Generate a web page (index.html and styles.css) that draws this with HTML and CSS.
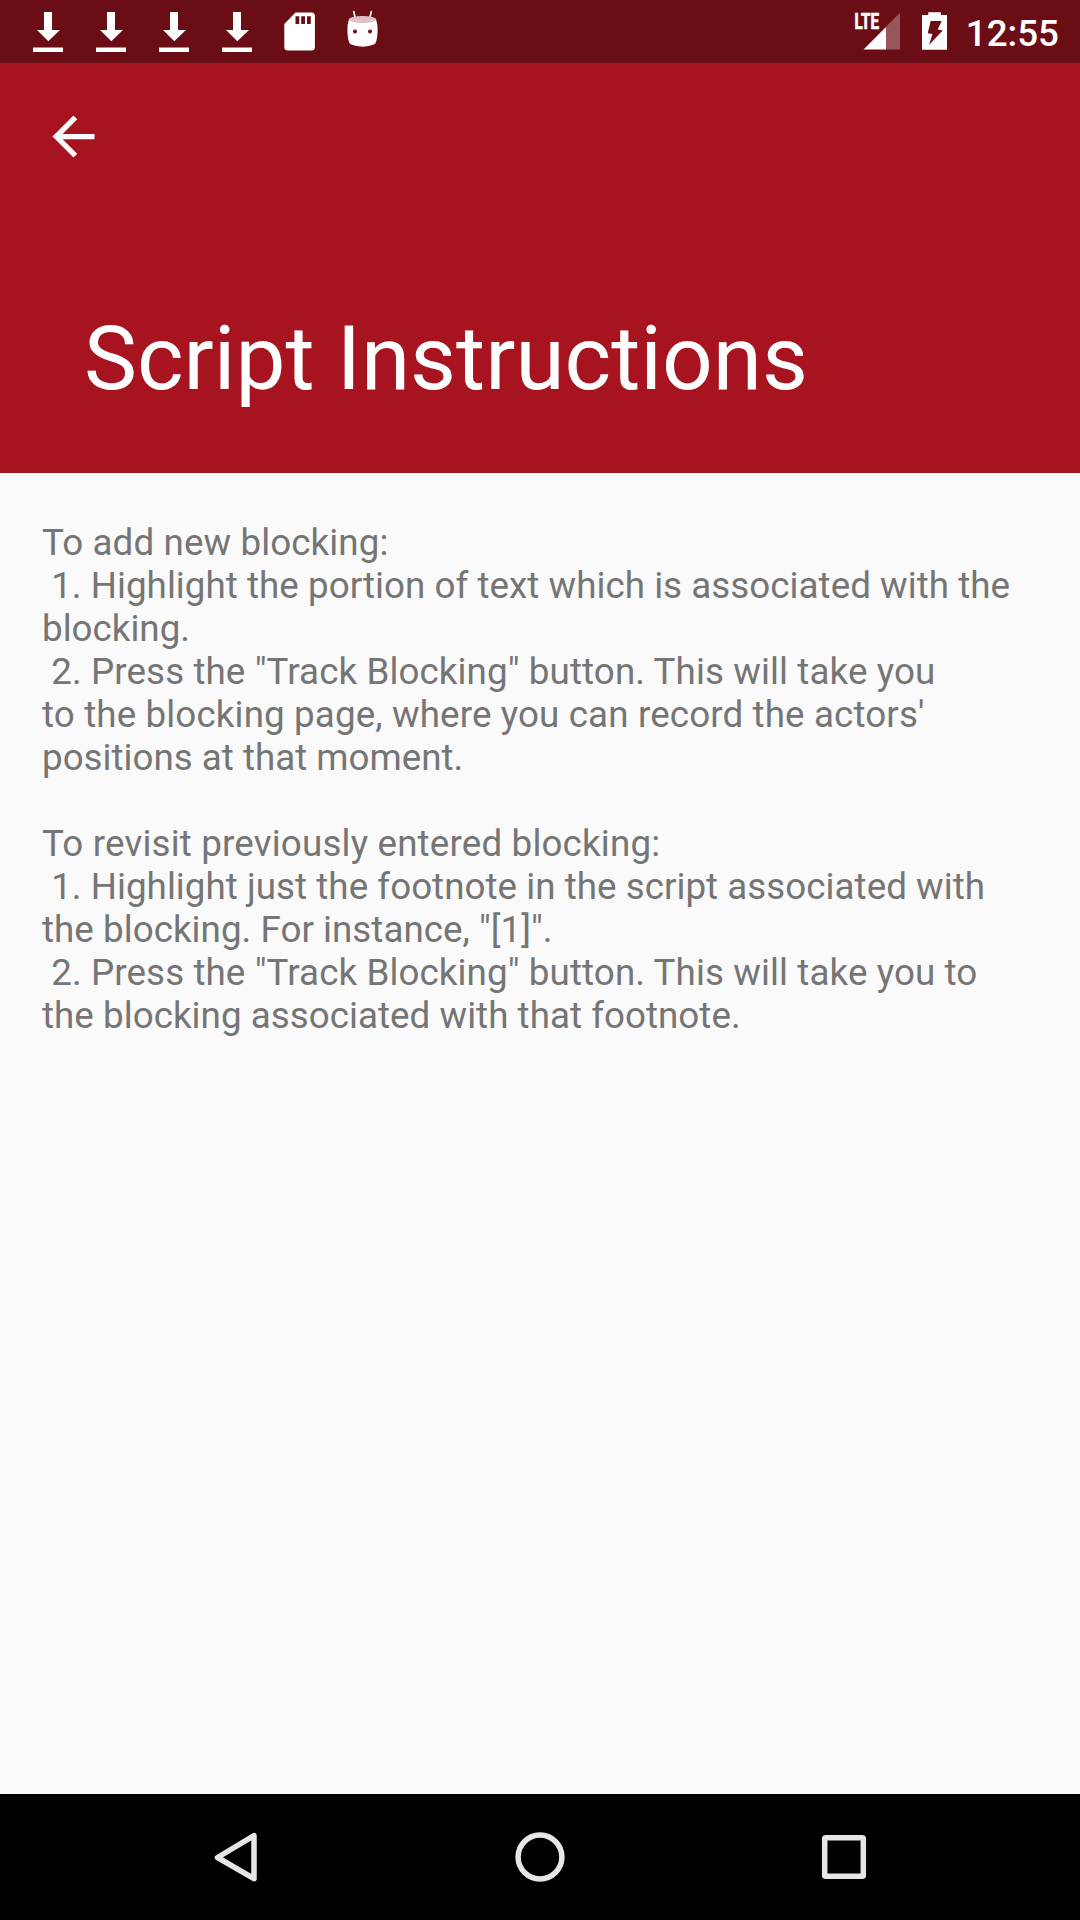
FILE: index.html
```html
<!DOCTYPE html>
<html lang="en">
<head>
<meta charset="utf-8">
<title>Script Instructions</title>
<link rel="stylesheet" href="styles.css">
</head>
<body>
<div class="screen">
  <div class="status-bar">
    <div class="notifications">
      <svg class="notif" viewBox="0 0 63 63"><path d="M28 12h8v18h8L32.3 41.3 21 30h7zM17 47.4h30v4.6H17z"/></svg>
      <svg class="notif" viewBox="0 0 63 63"><path d="M28 12h8v18h8L32.3 41.3 21 30h7zM17 47.4h30v4.6H17z"/></svg>
      <svg class="notif" viewBox="0 0 63 63"><path d="M28 12h8v18h8L32.3 41.3 21 30h7zM17 47.4h30v4.6H17z"/></svg>
      <svg class="notif" viewBox="0 0 63 63"><path d="M28 12h8v18h8L32.3 41.3 21 30h7zM17 47.4h30v4.6H17z"/></svg>
      <svg class="notif" viewBox="0 0 63 63"><path fill-rule="evenodd" d="M27.5 12.5H43.5Q46.9 12.7 46.9 16V47Q46.9 50.5 43.5 50.5H19.8Q16.3 50.5 16.3 47V24zM27.5 16.3V24h3.8V16.3zM33.2 16.3V24H37V16.3zM39 16.3V24h3.8V16.3z"/></svg>
      <svg class="notif" viewBox="0 0 63 63">
        <path d="M22.7 11.5l1.6 7M40.3 11.5l-1.6 7" stroke="#fff" stroke-width="1.6" stroke-linecap="round"/>
        <path fill-rule="evenodd" d="M18 19Q31.500 26 45 19Q46.800 24 46.600 31Q46.400 40 44 44Q38 46.700 31.500 46.700T19 44Q16.600 40 16.400 31Q16.200 24 18 19zM22 31.500a2 2 0 1 0 4 0a2 2 0 1 0-4 0zM37 31.500a2 2 0 1 0 4 0a2 2 0 1 0-4 0z"/>
        <ellipse class="droid-top" cx="31.500" cy="19.500" rx="13.500" ry="3.400"/>
      </svg>
    </div>
    <div class="system">
      <svg class="signal" viewBox="0 0 50 63">
        <path opacity=".3" d="M36 26.800L50 12.800V49.500H36z"/>
        <path d="M36 27V49.500H13.500z"/>
        <text class="lte" x="4.500" y="29" textLength="24.500" lengthAdjust="spacingAndGlyphs">LTE</text>
      </svg>
      <svg class="battery" viewBox="0 0 25 63"><path fill-rule="evenodd" d="M6.300 12.300h12.500v2.700H25V49.800H0V15h6.300zM8.700 21L5.700 33.300l4.800.7L7 45 20.700 30.500l-5-1L19.700 21z"/></svg>
      <span class="clock">12:55</span>
    </div>
  </div>
  <header class="app-bar">
    <svg class="back" viewBox="0 0 24 24"><path d="M20 11H7.830l5.590-5.590L12 4l-8 8 8 8 1.410-1.410L7.830 13H20v-2z"/></svg>
    <h1 class="title">Script Instructions</h1>
  </header>
  <main class="content">
    <div class="steps">
      <p class="line loose">To add new blocking:</p>
      <p class="line snug"> 1. Highlight the portion of text which is associated with the</p>
      <p class="line">blocking.</p>
      <p class="line loose"> 2. Press the "Track Blocking" button. This will take you</p>
      <p class="line looser">to the blocking page, where you can record the actors'</p>
      <p class="line">positions at that moment.</p>
    </div>
    <div class="steps">
      <p class="line loosest">To revisit previously entered blocking:</p>
      <p class="line snug"> 1. Highlight just the footnote in the script associated with</p>
      <p class="line snug">the blocking. For instance, "[1]".</p>
      <p class="line loose"> 2. Press the "Track Blocking" button. This will take you to</p>
      <p class="line snug">the blocking associated with that footnote.</p>
    </div>
  </main>
  <nav class="nav-bar">
    <svg class="nav-icon" viewBox="0 0 60 60"><path d="M48 8.700V51.700L11.500 30.500z"/></svg>
    <svg class="nav-icon" viewBox="0 0 60 60"><circle cx="30" cy="30" r="21.900"/></svg>
    <svg class="nav-icon" viewBox="0 0 60 60"><rect x="10.700" y="10.700" width="38.600" height="38.600" rx="1"/></svg>
  </nav>
</div>
</body>
</html>
```
FILE: styles.css
```css
body {
  margin: 0;
  font-family: Roboto, sans-serif;
}

.screen {
  display: flex;
  flex-direction: column;
  width: 1080px;
  height: 1920px;
  background: #fafafa;
  overflow: hidden;
}

.status-bar {
  display: flex;
  justify-content: space-between;
  height: 63px;
  padding: 0 21px 0 16px;
  background: #6a0d14;
  fill: #fff;
}

.notifications,
.system {
  display: flex;
}

.notif {
  width: 63px;
  height: 63px;
}

.droid-top {
  fill: #dcc3c6;
}

.signal {
  width: 50px;
  height: 63px;
  margin-right: 22px;
}

.lte {
  font-size: 21.5px;
  font-weight: 700;
  stroke: #fff;
  stroke-width: 0.7;
}

.battery {
  width: 25px;
  height: 63px;
  margin-right: 19px;
}

.clock {
  color: #fff;
  font-size: 36.75px;
  font-weight: 500;
  line-height: 67px;
}

.app-bar {
  display: flex;
  flex-direction: column;
  justify-content: space-between;
  height: 410px;
  padding: 42px 42px 62px 84px;
  box-sizing: border-box;
  background: #a7141f;
}

.back {
  width: 63px;
  height: 63px;
  margin-left: -42px;
  fill: #fff;
}

.title {
  margin: 0;
  color: #fff;
  font-size: 89.1px;
  font-weight: 400;
  line-height: 105px;
}

.content {
  display: flex;
  flex: 1;
  flex-direction: column;
  gap: 43px;
  padding: 48px 42px 0;
  color: #757575;
  font-size: 36.75px;
  line-height: 43px;
}

.line {
  margin: 0;
  white-space: pre;
}

.snug {
  letter-spacing: 0.035px;
}

.loose {
  letter-spacing: 0.1px;
}

.looser {
  letter-spacing: 0.13px;
}

.loosest {
  letter-spacing: 0.17px;
}

.nav-bar {
  display: flex;
  justify-content: center;
  align-items: center;
  gap: 244px;
  height: 126px;
  background: #000;
}

.nav-icon {
  width: 60px;
  height: 60px;
  fill: none;
  stroke: #e6e6e6;
  stroke-width: 5.5;
  stroke-linejoin: round;
}
```
